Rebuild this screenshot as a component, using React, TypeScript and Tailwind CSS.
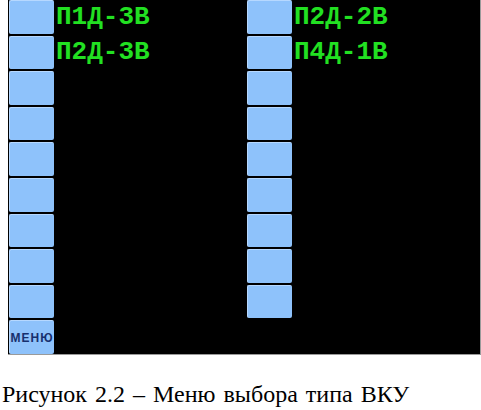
import React from "react";

// labels shown next to the soft keys, by row: [left, right]
const ROWS: [string, string][] = [
  ["П1Д-3В", "П2Д-2В"],
  ["П2Д-3В", "П4Д-1В"],
  ["", ""],
  ["", ""],
  ["", ""],
  ["", ""],
  ["", ""],
  ["", ""],
  ["", ""],
];

const Key = ({ children }: { children?: React.ReactNode }) => (
  <div className="h-full w-[45px] rounded-[2px] bg-[#8ec2fb] border-t border-l border-[#b6d8ff] flex items-center justify-center">
    {children}
  </div>
);

const Label = ({ text }: { text: string }) => (
  <div
    className="flex items-center pl-[2px] text-[26px] font-bold text-[#22e022] leading-none"
    style={{ fontFamily: '"Liberation Mono", monospace' }}
  >
    {text}
  </div>
);

const App = () => {
  return (
    <div className="w-[481px] h-[410px] bg-white overflow-hidden">
      <div className="ml-[8px] w-[473px] h-[355px] bg-black border-r border-b border-[#9a9a9a] pl-px">
        <div className="grid h-[354px] grid-cols-[45px_193px_45px_1fr] grid-rows-10 gap-y-[2px]">
          {ROWS.map(([l, r], i) => (
            <React.Fragment key={i}>
              <Key />
              <Label text={l} />
              <Key />
              <Label text={r} />
            </React.Fragment>
          ))}
          <Key>
            <span
              className="text-[12px] font-bold tracking-[1px] text-[#17306e] leading-none"
              style={{ fontFamily: '"Liberation Sans", sans-serif' }}
            >
              МЕНЮ
            </span>
          </Key>
        </div>
      </div>
      <p
        className="mt-[27px] pl-[2px] text-[24px] leading-[24px] tracking-normal [word-spacing:2px] text-black whitespace-nowrap"
        style={{ fontFamily: '"Liberation Serif", serif' }}
      >
        Рисунок 2.2 – Меню выбора типа ВКУ
      </p>
    </div>
  );
};

export default App;
